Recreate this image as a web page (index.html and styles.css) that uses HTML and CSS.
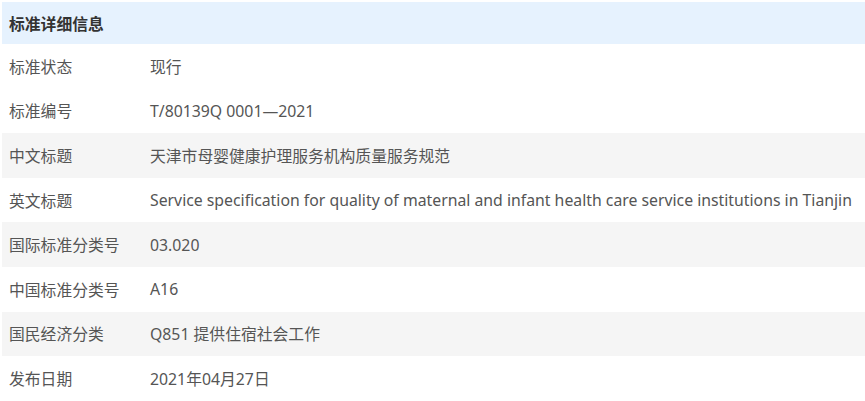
FILE: index.html
```html
<!DOCTYPE html>
<html lang="zh-CN">
<head>
<meta charset="utf-8">
<link rel="stylesheet" href="styles.css">
</head>
<body>
<div class="panel">
  <div class="head">标准详细信息</div>
  <div class="row"><div class="k">标准状态</div><div class="v">现行</div></div>
  <div class="row"><div class="k">标准编号</div><div class="v">T/80139Q 0001—2021</div></div>
  <div class="row alt"><div class="k">中文标题</div><div class="v">天津市母婴健康护理服务机构质量服务规范</div></div>
  <div class="row"><div class="k">英文标题</div><div class="v">Service specification for quality of maternal and infant health care service institutions in Tianjin</div></div>
  <div class="row alt"><div class="k">国际标准分类号</div><div class="v">03.020</div></div>
  <div class="row"><div class="k">中国标准分类号</div><div class="v">A16</div></div>
  <div class="row alt"><div class="k">国民经济分类</div><div class="v">Q851 提供住宿社会工作</div></div>
  <div class="row"><div class="k">发布日期</div><div class="v">2021年04月27日</div></div>
</div>
</body>
</html>
```
FILE: styles.css
```css
html, body { margin: 0; padding: 0; background: #fff; }
body {
  font-family: "Noto Sans", "Noto Sans CJK SC", sans-serif;
  font-size: 15.8px;
  color: #555;
  overflow: hidden;
}
.panel { padding: 2px 0 0 2px; }
.head {
  height: 42px;
  display: flex;
  align-items: center;
  padding-left: 7px;
  background: #e6f2fe;
  font-weight: bold;
  color: #333;
}
.row {
  height: 44.6px;
  display: flex;
  align-items: center;
}
.row.alt { background: #f5f5f5; }
.k { width: 141px; padding-left: 7px; flex: none; }
.v { white-space: nowrap; }
```
